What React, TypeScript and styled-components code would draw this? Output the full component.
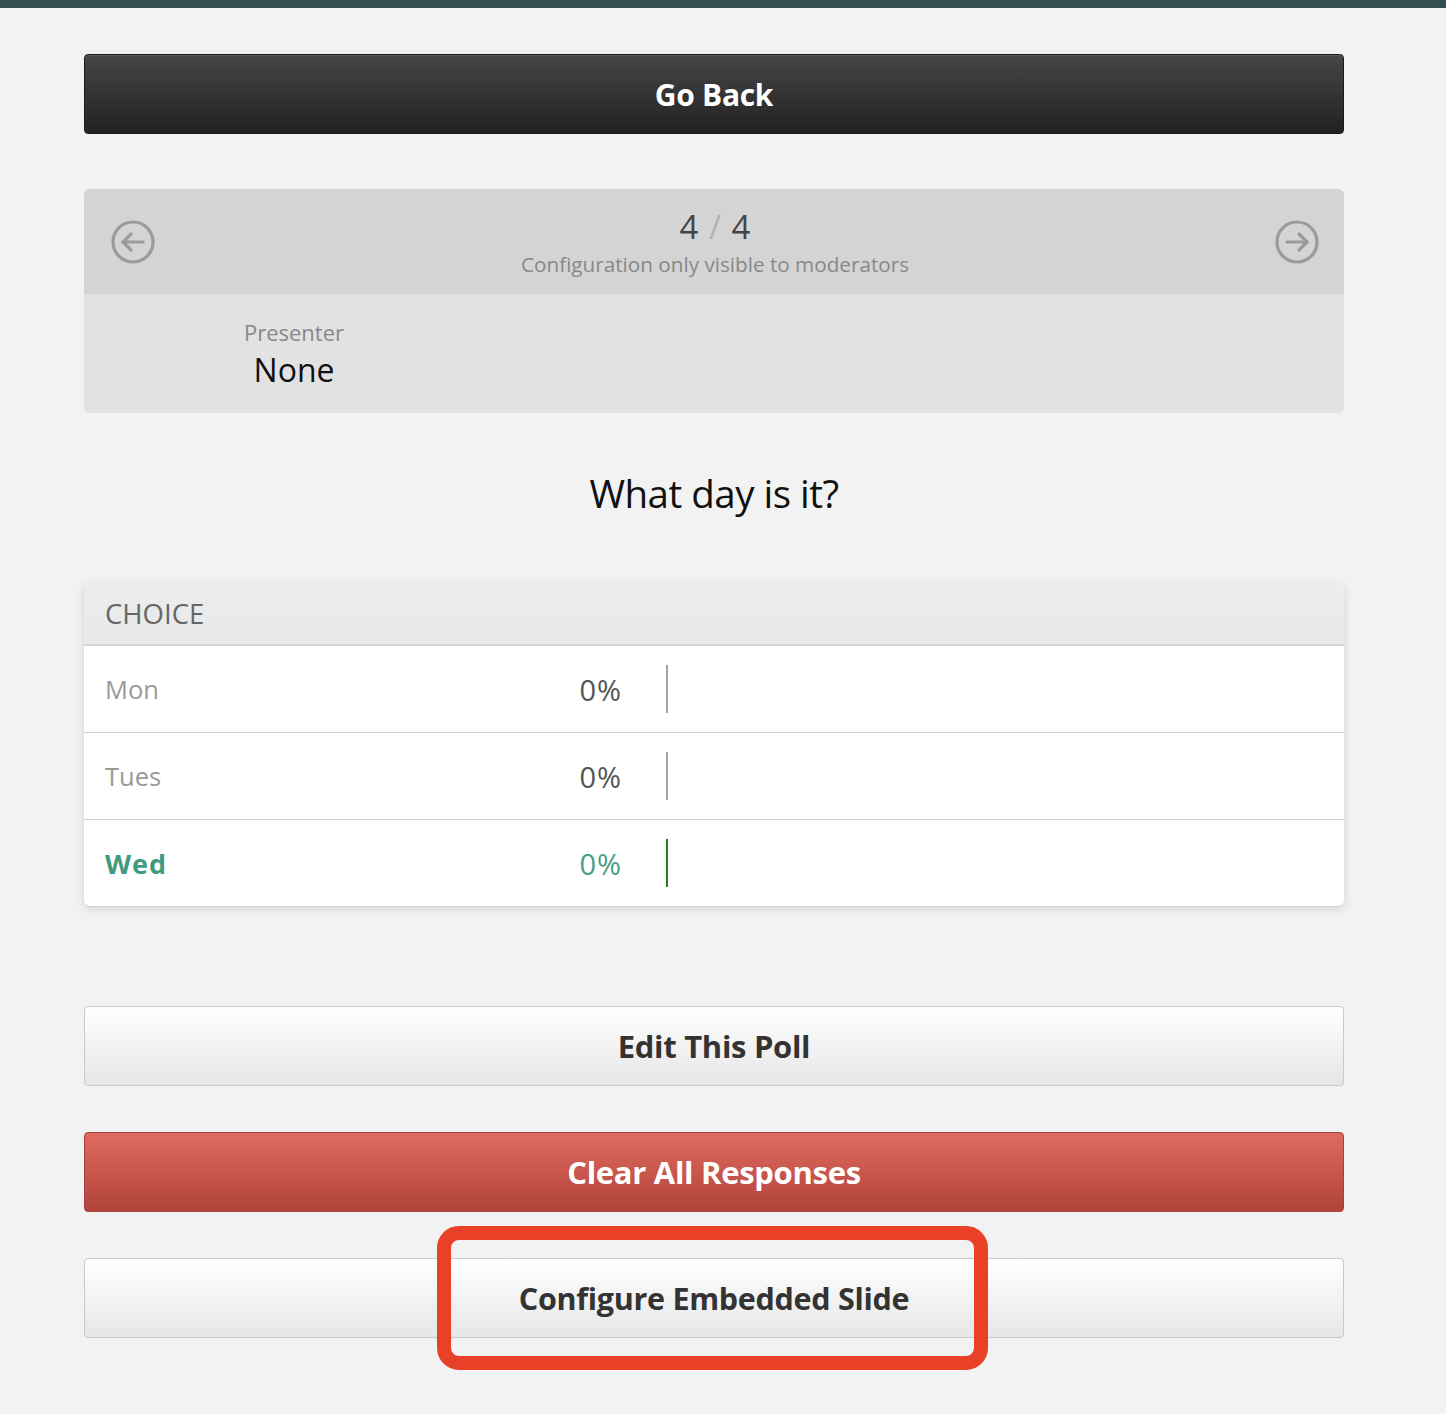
import styled, { createGlobalStyle } from 'styled-components'

const GlobalStyle = createGlobalStyle`
  html, body {
    margin: 0;
    padding: 0;
    background: #f2f2f2;
  }
  body {
    font-family: "Open Sans", "Noto Sans", "DejaVu Sans", sans-serif;
  }
`

const choices = [
  { label: 'Mon', pct: 0, correct: false },
  { label: 'Tues', pct: 0, correct: false },
  { label: 'Wed', pct: 0, correct: true },
]

function ArrowCircle({ dir }: { dir: 'left' | 'right' }) {
  return (
    <svg width="46" height="46" viewBox="0 0 46 46" fill="none" stroke="#9b9b9b" strokeWidth="3.2" strokeLinecap="round" strokeLinejoin="round">
      <circle cx="23" cy="23" r="20" />
      {dir === 'left' ? (
        <>
          <path d="M33 23H13" />
          <path d="M21 15l-8 8 8 8" />
        </>
      ) : (
        <>
          <path d="M13 23h20" />
          <path d="M25 15l8 8-8 8" />
        </>
      )}
    </svg>
  )
}

function App() {
  return (
    <>
      <GlobalStyle />
      <TopBar />
      <Page>
        <DarkButton>Go Back</DarkButton>

        <Panel>
          <PanelHead>
            <NavBtn><ArrowCircle dir="left" /></NavBtn>
            <Counter>
              <Count>4 <Slash>/</Slash> 4</Count>
              <Note>Configuration only visible to moderators</Note>
            </Counter>
            <NavBtn><ArrowCircle dir="right" /></NavBtn>
          </PanelHead>
          <PanelBody>
            <Field>
              <FieldLabel>Presenter</FieldLabel>
              <FieldValue>None</FieldValue>
            </Field>
          </PanelBody>
        </Panel>

        <Question>What day is it?</Question>

        <Table>
          <TableHead>CHOICE</TableHead>
          {choices.map((c) => (
            <Row key={c.label}>
              <Choice $correct={c.correct}>{c.label}</Choice>
              <Pct $correct={c.correct}>{c.pct}%</Pct>
              <BarCell>
                <Bar $correct={c.correct} style={{ width: `${Math.max(c.pct, 0)}%` }} />
              </BarCell>
            </Row>
          ))}
        </Table>

        <Actions>
          <LightButton>Edit This Poll</LightButton>
          <RedButton>Clear All Responses</RedButton>
          <Highlighted>
            <LightButton $size={30.5}>Configure Embedded Slide</LightButton>
            <Callout />
          </Highlighted>
        </Actions>
      </Page>
    </>
  )
}

const TopBar = styled.div`
  height: 8px;
  background: #354d50;
`
const Page = styled.main`
  width: 1260px;
  margin: 0 0 0 84px;
  padding: 46px 0 75px 0;
  display: flex;
  flex-direction: column;
`
const ButtonBase = styled.button<{ $size?: number }>`
  width: 100%;
  height: 80px;
  border-radius: 4px;
  font-family: "Open Sans", "Noto Sans", sans-serif;
  font-weight: 700;
  font-size: ${(p) => p.$size ?? 31}px;
  letter-spacing: -0.3px;
  display: flex;
  align-items: center;
  justify-content: center;
  cursor: pointer;
  box-sizing: border-box;
`
const DarkButton = styled(ButtonBase)`
  background: linear-gradient(#464646, #222222);
  border: 1px solid #1a1a1a;
  color: #fff;
  font-size: 30px;
  box-shadow: inset 0 1px 0 rgba(255,255,255,0.12);
`
const LightButton = styled(ButtonBase)`
  background: linear-gradient(#ffffff, #e6e6e6);
  border: 1px solid #c9c9c9;
  color: #333;
`
const RedButton = styled(ButtonBase)`
  background: linear-gradient(#df6a61, #b1433a);
  border: 1px solid #a8403a;
  color: #fff;
`
const Panel = styled.section`
  margin-top: 55px;
  border-radius: 6px;
  overflow: hidden;
`
const PanelHead = styled.div`
  height: 105px;
  background: #d4d4d4;
  display: flex;
  align-items: center;
  justify-content: space-between;
  padding: 0 24px 0 26px;
`
const NavBtn = styled.div`
  width: 46px;
  height: 46px;
  display: flex;
`
const Counter = styled.div`
  display: flex;
  flex-direction: column;
  align-items: center;
  padding-top: 2px;
`
const Count = styled.div`
  font-size: 33px;
  color: #444;
  line-height: 40px;
  word-spacing: 2px;
`
const Slash = styled.span`
  color: #b2b2b2;
`
const Note = styled.div`
  font-size: 20.7px;
  color: #888;
  line-height: 28px;
  margin-top: 3px;
`
const PanelBody = styled.div`
  height: 119px;
  background: #e2e2e2;
  display: grid;
  grid-template-columns: repeat(3, 1fr);
  align-items: start;
  padding-top: 22px;
  box-sizing: border-box;
`
const Field = styled.div`
  display: flex;
  flex-direction: column;
  align-items: center;
`
const FieldLabel = styled.div`
  font-size: 22px;
  color: #888;
  line-height: 32px;
`
const FieldValue = styled.div`
  font-size: 32px;
  color: #111;
  line-height: 44px;
`
const Question = styled.h2`
  margin: 52px 0 62px 0;
  text-align: center;
  font-weight: 400;
  font-size: 38.5px;
  letter-spacing: -0.5px;
  color: #111;
  line-height: 56px;
`
const Table = styled.section`
  background: #fff;
  border-radius: 6px;
  border-bottom: 1px solid #d2d2d2;
  box-shadow: 0 2px 10px rgba(0,0,0,0.13);
  overflow: hidden;
`
const TableHead = styled.div`
  height: 62px;
  background: linear-gradient(#ededed, #e8e8e8);
  border-bottom: 1px solid #d6d6d6;
  display: flex;
  align-items: center;
  padding-left: 21px;
  font-size: 27.5px;
  color: #666;
  box-sizing: border-box;
`
const Row = styled.div`
  height: 87px;
  display: grid;
  grid-template-columns: 399px 118px 1fr;
  align-items: center;
  padding-left: 21px;
  border-top: 1px solid #cfcfcf;
  box-sizing: border-box;
  &:first-of-type { border-top: none; }
`
const Choice = styled.div<{ $correct: boolean }>`
  font-size: ${(p) => (p.$correct ? 27 : 25.5)}px;
  letter-spacing: ${(p) => (p.$correct ? 1 : 0)}px;
  color: ${(p) => (p.$correct ? '#3f9a7f' : '#999')};
  font-weight: ${(p) => (p.$correct ? 700 : 400)};
`
const Pct = styled.div<{ $correct: boolean }>`
  font-size: 29px;
  letter-spacing: 1px;
  text-align: right;
  color: ${(p) => (p.$correct ? '#46a085' : '#555')};
`
const BarCell = styled.div`
  height: 48px;
  margin-left: 44px;
  display: flex;
`
const Bar = styled.div<{ $correct: boolean }>`
  min-width: 2px;
  height: 100%;
  background: ${(p) => (p.$correct ? '#2e7d1f' : '#9aa5a8')};
`
const Actions = styled.div`
  margin-top: 99px;
  display: flex;
  flex-direction: column;
  gap: 46px;
`
const Highlighted = styled.div`
  position: relative;
`
const Callout = styled.div`
  position: absolute;
  left: 353px;
  top: -32px;
  width: 551px;
  height: 144px;
  border: 14px solid #e94128;
  border-radius: 22px;
  box-sizing: border-box;
  pointer-events: none;
`

export default App
